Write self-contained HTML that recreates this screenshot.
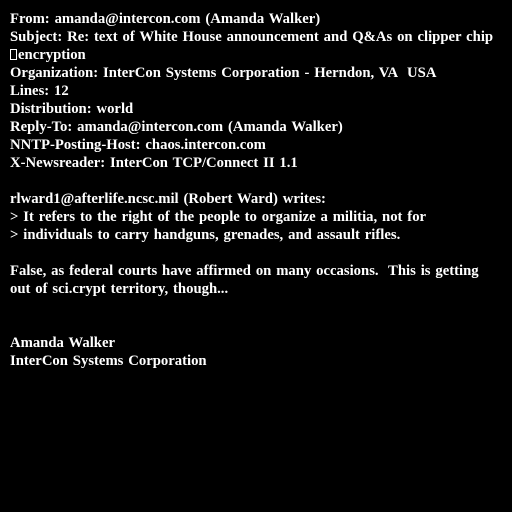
<!DOCTYPE html>
<html><head><style>
html,body{margin:0;background:#000;width:512px;height:512px;overflow:hidden}
pre{margin:0;position:absolute;left:10px;top:10px;color:#fff;font-family:"Liberation Serif",serif;font-weight:bold;font-size:14.7px;line-height:18px;white-space:pre;word-spacing:1.2px}
.b{display:inline-block;width:7px;height:11px;border:1px solid #fff;vertical-align:-1px;margin-right:1px;box-sizing:border-box}
</style></head><body>
<pre>From: amanda@intercon.com (Amanda Walker)
Subject: Re: text of White House announcement and Q&amp;As on clipper chip
<span class="b"></span>encryption
Organization: InterCon Systems Corporation - Herndon, VA  USA
Lines: 12
Distribution: world
Reply-To: amanda@intercon.com (Amanda Walker)
NNTP-Posting-Host: chaos.intercon.com
X-Newsreader: InterCon TCP/Connect II 1.1

rlward1@afterlife.ncsc.mil (Robert Ward) writes:
&gt; It refers to the right of the people to organize a militia, not for
&gt; individuals to carry handguns, grenades, and assault rifles.

False, as federal courts have affirmed on many occasions.  This is getting
out of sci.crypt territory, though...


Amanda Walker
InterCon Systems Corporation
</pre>
</body></html>
